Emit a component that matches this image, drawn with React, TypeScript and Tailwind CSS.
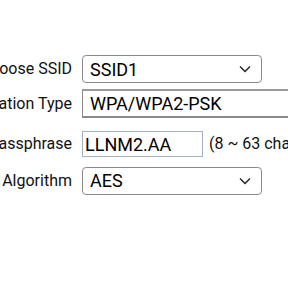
import React from "react";

function Chevron() {
  return (
    <svg width="12" height="8" viewBox="0 0 12 8" className="absolute right-[10px] top-1/2 -translate-y-1/2">
      <path d="M1 1.5 L6 6.5 L11 1.5" fill="none" stroke="#222" strokeWidth="1.4" />
    </svg>
  );
}

function Select({ value }: { value: string }) {
  return (
    <div className="relative shrink-0 w-[180px] h-[28px] border border-[#8a8a8a] rounded-[4px] bg-white pl-[7px] flex items-center text-[18px] text-black">
      {value}
      <Chevron />
    </div>
  );
}

export default function App() {
  return (
    <div className="w-[288px] h-[288px] bg-white overflow-hidden font-['Roboto',sans-serif] text-[16px] text-[#111]">
      <div className="ml-[-118px] pt-[55px] flex flex-col">
        <div className="flex items-center h-[28px]">
          <div className="w-[200px] shrink-0 pr-[10px] text-right whitespace-nowrap">Choose SSID</div>
          <Select value="SSID1" />
        </div>
        <div className="flex items-center h-[29px] mt-[6px]">
          <div className="w-[200px] shrink-0 pr-[10px] text-right whitespace-nowrap">Authentication Type</div>
          <div className="w-[260px] shrink-0 h-[29px] border-y-2 border-x border-[#8a8a8a] border-t-[#9a9a9a] pl-[7px] flex items-center text-[18px] text-black whitespace-nowrap">
            WPA/WPA2-PSK
          </div>
        </div>
        <div className="flex items-center h-[26px] mt-[13px]">
          <div className="w-[200px] shrink-0 pr-[10px] text-right whitespace-nowrap">Passphrase</div>
          <div className="w-[121px] shrink-0 h-[26px] border border-[#9fb0c2] pl-[2px] flex items-center text-[18px] text-black">
            LLNM2.AA
          </div>
          <div className="ml-[6px] whitespace-nowrap">(8 ~ 63 characters)</div>
        </div>
        <div className="flex items-center h-[27px] mt-[10px]">
          <div className="w-[200px] shrink-0 pr-[10px] text-right whitespace-nowrap">Encryption Algorithm</div>
          <Select value="AES" />
        </div>
      </div>
    </div>
  );
}
